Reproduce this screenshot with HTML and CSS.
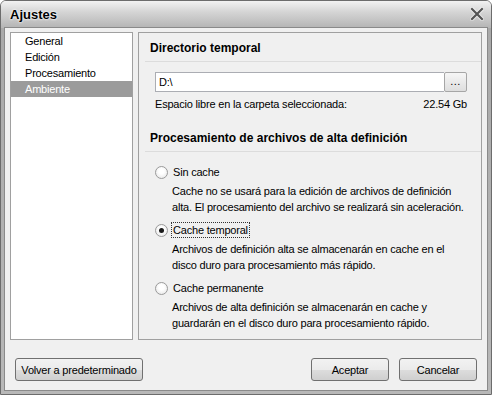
FILE: index.html
```html
<!DOCTYPE html>
<html>
<head>
<meta charset="utf-8">
<link rel="stylesheet" href="styles.css">
</head>
<body>
<div class="window">
  <div class="titlebar">
    <span class="title">Ajustes</span>
    <svg class="close" width="14" height="14" viewBox="0 0 14 14"><path d="M2 2 L12 12 M12 2 L2 12" stroke="#ffffff" stroke-width="4" stroke-linecap="square" opacity="0.6"/><path d="M2 2 L12 12 M12 2 L2 12" stroke="#555555" stroke-width="2.2" stroke-linecap="square"/></svg>
  </div>
  <div class="client">
    <div class="main">
      <ul class="nav">
        <li>General</li>
        <li>Edición</li>
        <li>Procesamiento</li>
        <li class="sel">Ambiente</li>
      </ul>
      <div class="panel">
        <div class="section-title">Directorio temporal</div>
        <div class="path-row">
          <div class="input">D:\</div>
          <div class="browse">...</div>
        </div>
        <div class="space-row">
          <span>Espacio libre en la carpeta seleccionada:</span>
          <span>22.54 Gb</span>
        </div>
        <div class="section-title second">Procesamiento de archivos de alta definición</div>
        <div class="option first">
          <div class="radio-line"><span class="radio"></span><span class="label">Sin cache</span></div>
          <p class="desc">Cache no se usará para la edición de archivos de definición<br>alta. El procesamiento del archivo se realizará sin aceleración.</p>
        </div>
        <div class="option">
          <div class="radio-line"><span class="radio checked"></span><span class="label focus">Cache temporal</span></div>
          <p class="desc">Archivos de definición alta se almacenarán en cache en el<br>disco duro para procesamiento más rápido.</p>
        </div>
        <div class="option">
          <div class="radio-line"><span class="radio"></span><span class="label">Cache permanente</span></div>
          <p class="desc">Archivos de alta definición se almacenarán en cache y<br>guardarán en el disco duro para procesamiento rápido.</p>
        </div>
      </div>
    </div>
    <div class="footer">
      <button class="btn wide">Volver a predeterminado</button>
      <div class="spacer"></div>
      <button class="btn">Aceptar</button>
      <button class="btn">Cancelar</button>
    </div>
  </div>
</div>
</body>
</html>
```

FILE: styles.css
```css
* { box-sizing: border-box; }
html, body { margin: 0; padding: 0; background: #ffffff; }
body { font-family: "Liberation Sans", Arial, sans-serif; font-size: 11px; letter-spacing: -0.2px; color: #000; }

.window {
  width: 492px;
  height: 395px;
  border: 1px solid #6c6c6c;
  border-radius: 6px 6px 0 0;
  background: linear-gradient(#f4f4f4 0px, #c4c4c4 26px, #a9a9a9 27px, #b8b8b8 100%);
  display: flex;
  flex-direction: column;
  overflow: hidden;
}

.titlebar {
  height: 26px;
  display: flex;
  align-items: center;
  padding: 0 7px 0 9px;
  background: linear-gradient(#f2f2f2, #d6d6d6 40%, #b6b6b6);
}
.title {
  font-weight: bold;
  font-size: 13px;
  letter-spacing: 0;
  text-shadow: 0 0 3px #ffffff, 0 0 2px #ffffff;
  flex: 1;
}

.client {
  flex: 1;
  margin: 0 3px 3px 3px;
  border: 1px solid #8a8a8a;
  background: #f0f0f0;
  display: flex;
  flex-direction: column;
  padding: 4px 5px 0 5px;
}

.main {
  display: flex;
  gap: 5px;
  height: 308px;
  flex: none;
}

.nav {
  list-style: none;
  margin: 0;
  padding: 0;
  width: 123px;
  background: #fff;
  border: 1px solid #a0a0a0;
}
.nav li {
  height: 16px;
  line-height: 16px;
  padding-left: 14px;
}
.nav li.sel { background: #9b9b9b; color: #fff; }

.panel {
  flex: 1;
  border: 1px solid #a0a0a0;
  background: #f0f0f0;
  padding: 0 0 0 6px;
}

.section-title {
  font-weight: bold;
  font-size: 12px;
  letter-spacing: 0;
  height: 29px;
  line-height: 30px;
  padding-left: 5px;
  border-bottom: 1px solid #dcdcdc;
}
.section-title.second { margin-top: 11px; }

.path-row {
  display: flex;
  margin: 10px 14px 0 10px;
  height: 20px;
}
.input {
  flex: 1;
  background: #fff;
  border: 1px solid #abadb3;
  border-right: none;
  line-height: 18px;
  padding-left: 3px;
}
.browse {
  width: 23px;
  border: 1px solid #a6a6a6;
  border-radius: 2px;
  background: linear-gradient(#f6f6f6, #dedede);
  text-align: center;
  line-height: 16px;
  letter-spacing: 0.5px;
}

.space-row {
  display: flex;
  justify-content: space-between;
  margin: 4px 14px 0 10px;
  line-height: 16px;
}

.option { padding-left: 10px; margin-top: 7px; }
.option.first { margin-top: 12px; }
.radio-line { display: flex; align-items: center; height: 16px; }
.radio {
  width: 13px;
  height: 13px;
  border-radius: 50%;
  border: 1px solid #9a9a9a;
  background: radial-gradient(circle at 50% 40%, #ffffff 30%, #e2e2e2 100%);
  margin-right: 3px;
  position: relative;
  flex: none;
}
.radio.checked::after {
  content: "";
  position: absolute;
  left: 3px; top: 3px;
  width: 5px; height: 5px;
  border-radius: 50%;
  background: #1a1a1a;
}
.label { padding: 0 1px; line-height: 14px; border: 1px dotted transparent; }
.label.focus { border-color: #333; }
.desc {
  margin: 3px 0 0 17px;
  line-height: 16px;
  white-space: nowrap;
}

.footer {
  display: flex;
  align-items: flex-start;
  gap: 10px;
  padding: 18px 5px 0 5px;
  flex: 1;
}
.spacer { flex: 1; }
.btn {
  font-family: inherit;
  font-size: 11px;
  letter-spacing: -0.2px;
  height: 23px;
  width: 78px;
  border: 1px solid #707070;
  border-radius: 3px;
  background: linear-gradient(#f2f2f2 0%, #ebebeb 50%, #dddddd 51%, #cfcfcf 100%);
  color: #000;
  padding: 0;
}
.btn.wide { width: 128px; }
```
